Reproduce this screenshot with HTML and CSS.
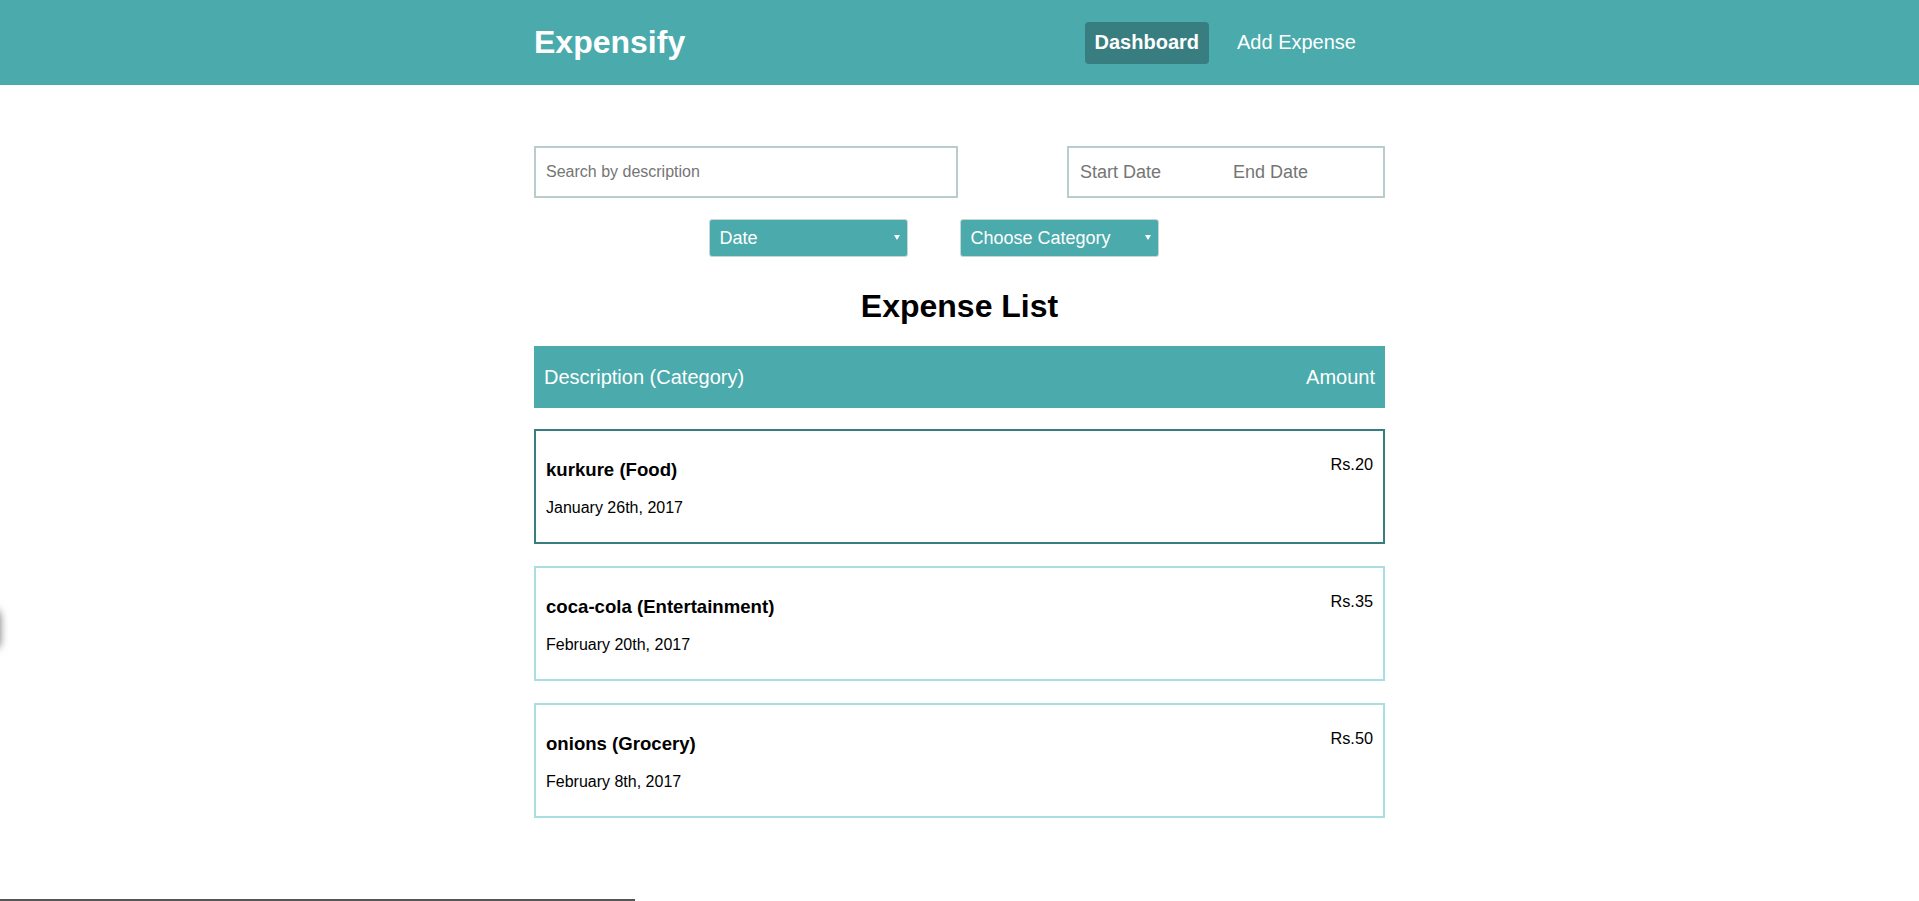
FILE: index.html
```html
<!DOCTYPE html>
<html lang="en">
<head>
<meta charset="utf-8">
<title>Expensify</title>
<link rel="stylesheet" href="styles.css">
</head>
<body>
<header class="header">
  <div class="container header-inner">
    <h1 class="brand">Expensify</h1>
    <nav class="nav">
      <a class="nav-link is-active" href="#">Dashboard</a>
      <a class="nav-link" href="#">Add Expense</a>
    </nav>
  </div>
</header>

<main class="container">
  <section class="filters">
    <div class="filter-row">
      <input class="search" type="text" placeholder="Search by description">
      <div class="date-range">
        <input class="date-input" type="text" placeholder="Start Date">
        <input class="date-input" type="text" placeholder="End Date">
      </div>
    </div>
    <div class="select-row">
      <div class="select-wrap">
        <select class="select"><option>Date</option><option>Amount</option></select>
      </div>
      <div class="select-wrap">
        <select class="select"><option>Choose Category</option><option>Food</option></select>
      </div>
    </div>
  </section>

  <h2 class="list-title">Expense List</h2>

  <div class="list-header">
    <span>Description (Category)</span>
    <span>Amount</span>
  </div>

  <div class="list">
    <a class="item is-focused" href="#">
      <div>
        <h3 class="item-title">kurkure (Food)</h3>
        <div class="item-date">January 26th, 2017</div>
      </div>
      <div class="item-amount">Rs.20</div>
    </a>
    <a class="item" href="#">
      <div>
        <h3 class="item-title">coca-cola (Entertainment)</h3>
        <div class="item-date">February 20th, 2017</div>
      </div>
      <div class="item-amount">Rs.35</div>
    </a>
    <a class="item" href="#">
      <div>
        <h3 class="item-title">onions (Grocery)</h3>
        <div class="item-date">February 8th, 2017</div>
      </div>
      <div class="item-amount">Rs.50</div>
    </a>
  </div>
</main>

<div class="offscreen-toast"></div>
<div class="progress-line"></div>
</body>
</html>
```

FILE: styles.css
```css
* { box-sizing: border-box; }

html, body {
  margin: 0;
  padding: 0;
}

body {
  font-family: "Liberation Sans", Arial, Helvetica, sans-serif;
  color: #000;
  background: #fff;
  overflow: hidden;
}

.container {
  width: 851px;
  margin: 0 auto;
}

/* Header */
.header {
  background: #4aaaac;
  height: 85px;
}

.header-inner {
  height: 100%;
  display: flex;
  align-items: center;
  justify-content: space-between;
}

.brand {
  margin: 0 0 1px 0;
  font-size: 32px;
  font-weight: bold;
  color: #fff;
}

.nav {
  display: flex;
  align-items: center;
  gap: 18px;
  margin-right: 19px;
}

.nav-link {
  color: #fff;
  text-decoration: none;
  font-size: 20px;
  padding: 9px 10px 10px;
  border-radius: 4px;
}

.nav-link.is-active {
  background: #387e80;
  font-weight: bold;
}

/* Filters */
.filters {
  margin-top: 61px;
}

.filter-row {
  display: flex;
  justify-content: space-between;
  align-items: flex-start;
}

.search {
  width: 424px;
  height: 52px;
  border: 2px solid #b8cdcc;
  padding: 0 10px;
  font-family: inherit;
  font-size: 16px;
  color: #333;
  outline: none;
}

.search::placeholder,
.date-input::placeholder {
  color: #757575;
}

.date-range {
  display: flex;
  width: 318px;
  height: 52px;
  border: 2px solid #b8cdcc;
}

.date-input {
  width: 153px;
  border: none;
  padding: 0 11px;
  font-family: inherit;
  font-size: 18px;
  outline: none;
  background: transparent;
}

.select-row {
  display: flex;
  justify-content: center;
  margin-top: 21px;
}

.select-wrap {
  position: relative;
  margin-right: 52px;
}

.select-wrap::after {
  content: "";
  position: absolute;
  right: 8px;
  top: 16px;
  border-left: 3px solid transparent;
  border-right: 3px solid transparent;
  border-top: 5px solid #fff;
  pointer-events: none;
}

.select {
  -webkit-appearance: none;
  appearance: none;
  width: 199px;
  height: 38px;
  background: #4aaaac;
  color: #fff;
  border: 1px solid #c9d6d6;
  border-radius: 3px;
  padding: 0 10px;
  font-family: inherit;
  font-size: 18px;
  outline: none;
}

/* List */
.list-title {
  text-align: center;
  font-size: 32px;
  font-weight: bold;
  margin: 31px 0 22px;
  line-height: 36px;
}

.list-header {
  display: flex;
  justify-content: space-between;
  background: #4aaaac;
  color: #fff;
  font-size: 20px;
  padding: 20px 10px 19px;
  line-height: 23px;
}

.list {
  display: flex;
  flex-direction: column;
  gap: 22px;
  margin-top: 21px;
}

.item {
  display: flex;
  justify-content: space-between;
  border: 2px solid #a9dfe0;
  padding: 10px;
  color: #000;
  text-decoration: none;
}

.item.is-focused {
  border-color: #387e80;
}

.item-title {
  margin: 18px 0 19px;
  font-size: 18.6px;
  font-weight: bold;
  line-height: 21px;
}

.item-date {
  font-size: 16px;
  line-height: 18px;
  margin-bottom: 15px;
}

.item-amount {
  font-size: 16.3px;
  line-height: 18px;
  margin-top: 14px;
}

/* Overlays at the page edges */
.offscreen-toast {
  position: fixed;
  left: -300px;
  top: 610px;
  width: 300px;
  height: 38px;
  border-radius: 6px;
  background: #fff;
  box-shadow: 0 0 8px rgba(0, 0, 0, 0.55);
}

.progress-line {
  position: fixed;
  left: 0;
  bottom: 0;
  width: 635px;
  height: 2px;
  background: #555;
}
```
